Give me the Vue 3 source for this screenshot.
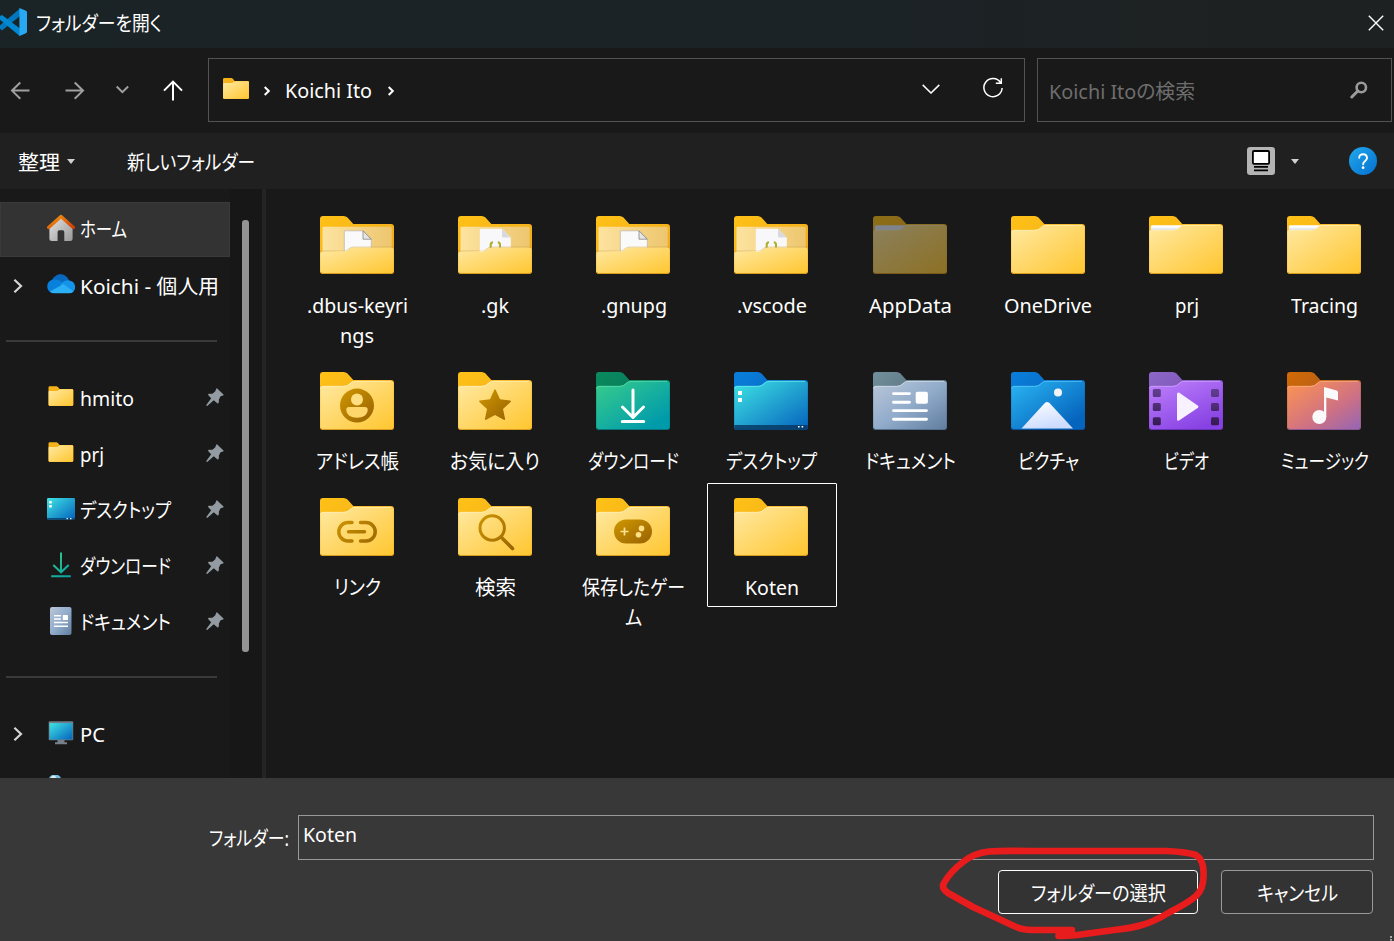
<script setup>
const applyFit = (el, { value }) => {
  el.style.transform = 'none'
  el.style.marginRight = '0'
  const natural = el.getBoundingClientRect().width
  if (!natural) return
  el.style.transform = `scaleX(${value / natural})`
  el.style.marginRight = `${value - natural}px`
}
const vFit = { mounted: applyFit }

const places = [
  { label: 'ホーム', w: 47, icon: 'home', active: true },
  { label: 'Koichi - 個人用', w: 139, icon: 'cloud', expand: true },
  { divider: true },
  { label: 'hmito', w: 54, icon: 'folder', pin: true },
  { label: 'prj', w: 24, icon: 'folder', pin: true },
  { label: 'デスクトップ', w: 91, icon: 'desktop', pin: true },
  { label: 'ダウンロード', w: 91, icon: 'download', pin: true },
  { label: 'ドキュメント', w: 91, icon: 'document', pin: true },
  { divider: true },
  { label: 'PC', w: 25, icon: 'pc', expand: true },
  { label: '', w: 0, icon: 'network' },
]

const themes = {
  yellow: ['fYBack', 'fYFront', '#fff0b8', '#d89b1c'],
  green: ['fGBack', 'fGFront', '#5fe0a8', '#08737c'],
  cyan: ['fBBack', 'fCFront', '#6cf0f2', '#0a4d8a'],
  grey: ['fSBack', 'fSFront', '#d5e0ec', '#54708f'],
  blue: ['fBBack', 'fBFront', '#5cc8fa', '#0b4fa0'],
  purple: ['fPBack', 'fPFront', '#d0a2ff', '#6a31bd'],
  orange: ['fOBack', 'fOFront', '#ffb37c', '#8a5595'],
}

const folders = [
  { lines: [['.dbus-keyri', 101], ['ngs', 34]], open: 'page' },
  { lines: [['.gk', 28]], open: 'code' },
  { lines: [['.gnupg', 66]], open: 'page' },
  { lines: [['.vscode', 70]], open: 'code' },
  { lines: [['AppData', 83]], slip: true, dim: true },
  { lines: [['OneDrive', 88]] },
  { lines: [['prj', 24]], slip: true },
  { lines: [['Tracing', 67]], slip: true },
  { lines: [['アドレス帳', 83]], mark: 'contact' },
  { lines: [['お気に入り', 90]], mark: 'star' },
  { lines: [['ダウンロード', 91]], mark: 'download', theme: 'green' },
  { lines: [['デスクトップ', 91]], mark: 'desktop', theme: 'cyan' },
  { lines: [['ドキュメント', 91]], mark: 'document', theme: 'grey' },
  { lines: [['ピクチャ', 61]], mark: 'picture', theme: 'blue' },
  { lines: [['ビデオ', 45]], mark: 'video', theme: 'purple' },
  { lines: [['ミュージック', 88]], mark: 'music', theme: 'orange' },
  { lines: [['リンク', 47]], mark: 'link' },
  { lines: [['検索', 41]], mark: 'search' },
  { lines: [['保存したゲー', 103], ['ム', 17]], mark: 'game' },
  { lines: [['Koten', 54]], selected: true },
].map((f) => ({ ...f, t: themes[f.theme || 'yellow'] }))

const frontPath =
  'M0.3 16.6Q0.3 13.9 3 13.9H23.5C27 13.9 28.6 12.6 30.2 11.1C31.8 9.6 33 8.9 35 8.9H71Q73.7 8.9 73.7 11.6V54.8Q73.7 57.5 71 57.5H3Q0.3 57.5 0.3 54.8Z'
const openPath =
  'M0.3 38Q0.3 35.5 2.8 35.5H24C28 35.5 29 31.6 34 31.6H71.2Q73.7 31.6 73.7 34V54.8Q73.7 57.5 71 57.5H3Q0.3 57.5 0.3 54.8Z'
</script>

<template>
  <div class="dialog">
    <svg class="defs" width="0" height="0" aria-hidden="true">
      <defs>
        <linearGradient id="fYBack" x1="0" y1="0" x2="1" y2="1"><stop offset="0" stop-color="#ffc216" /><stop offset="1" stop-color="#eda41f" /></linearGradient>
        <linearGradient id="fYFront" x1="0" y1="0" x2="1" y2="1"><stop offset="0" stop-color="#ffe9a3" /><stop offset="1" stop-color="#ffc62f" /></linearGradient>
        <linearGradient id="fYInner" x1="0" y1="0" x2="1" y2="0"><stop offset="0" stop-color="#fde3a0" /><stop offset="1" stop-color="#edc66f" /></linearGradient>
        <linearGradient id="fGBack" x1="0" y1="0" x2="1" y2="1"><stop offset="0" stop-color="#0a8a5c" /><stop offset="1" stop-color="#036b62" /></linearGradient>
        <linearGradient id="fGFront" x1="0" y1="0" x2="1" y2="1"><stop offset="0" stop-color="#38cd8b" /><stop offset=".85" stop-color="#009bab" /></linearGradient>
        <linearGradient id="fBBack" x1="0" y1="0" x2="1" y2="1"><stop offset="0" stop-color="#0a7fdc" /><stop offset="1" stop-color="#0558ad" /></linearGradient>
        <linearGradient id="fCFront" x1="0" y1="0" x2="1" y2="1"><stop offset="0" stop-color="#3fe4e4" /><stop offset="1" stop-color="#0562bd" /></linearGradient>
        <linearGradient id="fSBack" x1="0" y1="0" x2="1" y2="1"><stop offset="0" stop-color="#72909d" /><stop offset="1" stop-color="#40565f" /></linearGradient>
        <linearGradient id="fSFront" x1="0" y1="0" x2="1" y2="1"><stop offset="0" stop-color="#bac7d8" /><stop offset=".5" stop-color="#92accb" /><stop offset="1" stop-color="#607d9f" /></linearGradient>
        <linearGradient id="fBFront" x1="0" y1="0" x2="1" y2="1"><stop offset="0" stop-color="#2bb6f3" /><stop offset=".85" stop-color="#0564bd" /></linearGradient>
        <linearGradient id="fPBack" x1="0" y1="0" x2="1" y2="1"><stop offset="0" stop-color="#8d67c9" /><stop offset="1" stop-color="#6a419c" /></linearGradient>
        <linearGradient id="fPFront" x1="0.1" y1="0" x2=".7" y2="1"><stop offset="0" stop-color="#bc7ffa" /><stop offset="1" stop-color="#8640e3" /></linearGradient>
        <linearGradient id="fOBack" x1="0" y1="0" x2="1" y2="1"><stop offset="0" stop-color="#d46a04" /><stop offset="1" stop-color="#865037" /></linearGradient>
        <linearGradient id="fOFront" x1="0" y1="0" x2="1" y2="1"><stop offset="0" stop-color="#ff9550" /><stop offset=".6" stop-color="#cf7183" /><stop offset="1" stop-color="#9365b5" /></linearGradient>
        <linearGradient id="gold" x1="0" y1="0" x2="1" y2="1"><stop offset="0" stop-color="#cf9700" /><stop offset="1" stop-color="#986203" /></linearGradient>
        <linearGradient id="goldLine" gradientUnits="userSpaceOnUse" x1="18" y1="18" x2="56" y2="52"><stop offset="0" stop-color="#cf9700" /><stop offset="1" stop-color="#986203" /></linearGradient>
        <linearGradient id="snow" x1="0" y1="0" x2=".4" y2="1"><stop offset="0" stop-color="#ffffff" /><stop offset="1" stop-color="#cddcff" /></linearGradient>
        <linearGradient id="slip" x1="0" y1="0" x2="0" y2="1"><stop offset="0.3" stop-color="#ffffff" /><stop offset="1" stop-color="#d3dbe0" /></linearGradient>
        <linearGradient id="film" gradientUnits="userSpaceOnUse" x1="0" y1="14" x2="0" y2="54"><stop offset="0" stop-color="#664198" /><stop offset="1" stop-color="#35194f" /></linearGradient>
        <linearGradient id="roof" x1="0" y1="0" x2="1" y2="1"><stop offset="0" stop-color="#f59a12" /><stop offset="1" stop-color="#cf3c05" /></linearGradient>
        <linearGradient id="wall" x1="0" y1="0" x2="1" y2="1"><stop offset="0" stop-color="#e5e5e5" /><stop offset="1" stop-color="#999999" /></linearGradient>
        <linearGradient id="help" x1="0" y1="0" x2="1" y2="1"><stop offset="0" stop-color="#22a8ec" /><stop offset="1" stop-color="#0470d0" /></linearGradient>
        <linearGradient id="arrow" gradientUnits="userSpaceOnUse" x1="5" y1="2" x2="22" y2="26"><stop offset="0" stop-color="#35c987" /><stop offset="1" stop-color="#08a2a4" /></linearGradient>
      </defs>
    </svg>

    <header class="titlebar">
      <svg class="logo" width="28" height="32" viewBox="0 0 28 32">
        <path d="M-1 20 20 2.5 20 10 2 24.5-1 22Z" fill="#0277bd" />
        <path d="M-1 10.5 2 9 20 22.5V30.2L-1 13Z" fill="#0288d1" />
        <path d="M19.4 2 26 4.8Q27 5.4 27 6.5V25.5Q27 26.6 26 27.2L19.4 30Z" fill="#29a8f2" />
      </svg>
      <h1><span v-fit="126" class="fit">フォルダーを開く</span></h1>
      <svg class="close" width="16" height="16" viewBox="0 0 16 16"><path d="M.8.8 15.2 15.2M15.2.8.8 15.2" stroke="#fff" stroke-width="1.4" /></svg>
    </header>

    <nav class="navbar">
      <div class="history">
        <svg width="41" height="64" viewBox="0 0 41 64"><path d="M29.5 32.6H12M20.3 24.5 12 32.6 20.3 40.7" class="st grey" /></svg>
        <svg width="67" height="64" viewBox="0 0 67 64"><path d="M24.5 32.6H42M33.7 24.5 42 32.6 33.7 40.7" class="st grey" /></svg>
        <svg width="29" height="64" viewBox="0 0 29 64"><path d="M8.7 28.5 14.4 34.1 20.1 28.5" class="st grey" /></svg>
        <svg width="71" height="64" viewBox="0 0 71 64"><path d="M36 42.5V24M27 32.6 36 23.6 45 32.6" class="st white" /></svg>
      </div>
      <div class="address">
        <svg class="crumb-folder" width="26" height="21" viewBox="0 0 74 58" preserveAspectRatio="none">
          <path d="M0 4Q0 0 4 0H24Q28 0 33 8H70Q74 8 74 12V54Q74 58 70 58H4Q0 58 0 54Z" fill="#f6b21b" />
          <path :d="frontPath" fill="url(#fYFront)" />
        </svg>
        <svg class="crumb-sep" width="8" height="10" viewBox="0 0 8 10"><path d="M1.7 1 5.8 5 1.7 9" class="st white" /></svg>
        <span class="crumb"><span v-fit="87" class="fit">Koichi Ito</span></span>
        <svg class="crumb-sep last" width="8" height="10" viewBox="0 0 8 10"><path d="M1.7 1 5.8 5 1.7 9" class="st white" /></svg>
        <svg class="drop" width="18" height="10" viewBox="0 0 18 10"><path d="M.7.9 9 9 17.3.9" class="st thin" /></svg>
        <svg class="reload" width="22" height="22" viewBox="0 0 22 22"><path d="M18.6 5.6A9.1 9.1 0 1 0 20.1 11M19.3 1.2V6.3H13.8" class="st thin" /></svg>
      </div>
      <div class="search">
        <span v-fit="146" class="fit">Koichi Itoの検索</span>
        <svg width="18" height="18" viewBox="0 0 18 18"><circle cx="11.3" cy="6.5" r="4.7" fill="none" stroke="#9b9b9b" stroke-width="2.6" /><path d="M7.8 10 1.8 16" stroke="#9b9b9b" stroke-width="3" stroke-linecap="round" /></svg>
      </div>
    </nav>

    <div class="toolbar">
      <span v-fit="42" class="fit">整理</span>
      <i class="caret first"></i>
      <span v-fit="128" class="fit">新しいフォルダー</span>
      <svg class="view" width="28" height="28" viewBox="0 0 28 28">
        <rect width="28" height="28" rx="3.2" fill="#b4b4b4" />
        <rect x="5.9" y="4" width="16.2" height="12.8" rx="1" fill="#fff" stroke="#000" stroke-width="1.8" />
        <path d="M7 19.9H21M7 23.3H21" stroke="#000" stroke-width="1.7" />
      </svg>
      <i class="caret second"></i>
      <svg class="help" width="28" height="28" viewBox="0 0 28 28">
        <circle cx="14" cy="14" r="14" fill="url(#help)" />
        <path d="M10.2 10.8C10.2 6 18 6 18 11.1C18 14 14.1 14 14.1 17.2" fill="none" stroke="#fff" stroke-width="1.9" stroke-linecap="round" />
        <circle cx="14.1" cy="20.7" r="1.4" fill="#fff" />
      </svg>
    </div>

    <main class="body">
      <aside class="sidebar">
        <div class="tree">
          <template v-for="(p, i) in places" :key="i">
            <div v-if="p.divider" class="divider"><hr /></div>
            <div v-else class="row" :class="{ active: p.active }">
              <span class="twist">
                <svg v-if="p.expand" width="10" height="16" viewBox="0 0 10 16"><path d="M1.4 1.7 8 8 1.4 14.3" fill="none" stroke="#d6d6d6" stroke-width="2.2" /></svg>
              </span>
              <svg class="pic" width="28" height="28" viewBox="0 0 28 28">
                <g v-if="p.icon === 'home'">
                  <path d="M2.4 12 14 2.4 25.6 12V24.5Q25.6 27 23 27H17.3V18Q17.3 16.2 15.7 16.2H12.3Q10.6 16.2 10.6 18V27H5Q2.4 27 2.4 24.5Z" fill="url(#wall)" />
                  <path d="M1.6 13.5 14 2.5 26.4 13.5" fill="none" stroke="url(#roof)" stroke-width="3.2" stroke-linecap="round" stroke-linejoin="round" />
                </g>
                <g v-else-if="p.icon === 'cloud'">
                  <path d="M4 11C8 1 18 1 22 9L23 13 12 17Z" fill="#0868bd" />
                  <path d="M7 8.6C10 8.3 13 9.5 17 12.6L8 22H6C-2 21-1.5 9 7 8.6Z" fill="#0880dc" />
                  <path d="M14 13C17 9 20 9 22.5 9.4C29.5 10.5 30 20 24 22H10Z" fill="#1493e8" />
                  <path d="M3 20.5 16.5 13 26.5 20.6Q25 22.3 22.5 22.3H6.5Q4 22.2 3 20.5Z" fill="#2bb0f6" />
                </g>
                <g v-else-if="p.icon === 'folder'" transform="translate(1.5 3.2) scale(.335 .34)">
                  <path d="M0 4Q0 0 4 0H24Q28 0 33 8H70Q74 8 74 12V54Q74 58 70 58H4Q0 58 0 54Z" fill="#f6b21b" />
                  <path :d="frontPath" fill="url(#fYFront)" />
                </g>
                <g v-else-if="p.icon === 'desktop'" transform="translate(0 1)">
                  <rect x="0" y="2" width="28" height="21.5" rx="1.2" fill="url(#fCFront)" />
                  <path d="M0 22H28Q28 23.5 27 23.5H1Q0 23.5 0 22Z" fill="#0b4b7a" />
                  <path d="M2.2 5H4.8V7.5H2.2ZM2.2 9H4.8V11.5H2.2Z" fill="#fff" />
                  <path d="M19.5 22H21V23.3H19.5ZM23 22H24.5V23.3H23Z" fill="#dcecff" />
                </g>
                <path v-else-if="p.icon === 'download'" d="M14 1.5V21M6.3 14 14 21.3 21.7 14M4.2 25.2H23.8" fill="none" stroke="url(#arrow)" stroke-width="2" />
                <g v-else-if="p.icon === 'document'">
                  <rect x="3" y="0" width="21.5" height="28" rx="2" fill="url(#fSFront)" />
                  <path d="M7 8.8H14M7 12H14M7 15.6H21M7 19.2H21" stroke="#fff" stroke-width="1.5" />
                  <rect x="15.8" y="8" width="5.2" height="5" rx=".6" fill="#fff" />
                </g>
                <g v-else-if="p.icon === 'pc'" transform="translate(0 .7)">
                  <path d="M10.5 20H17.5V22.5H20V24.5H8V22.5H10.5Z" fill="#77818b" />
                  <rect x="1.7" y="1.5" width="24.5" height="19" rx="1" fill="#707c86" />
                  <rect x="2.5" y="3.4" width="23" height="16.4" fill="url(#fCFront)" />
                </g>
                <g v-else>
                  <circle cx="8" cy="6" r="6.6" fill="#78bedd" />
                  <circle cx="6.5" cy="3" r="2.5" fill="#d7ebf5" />
                </g>
              </svg>
              <span class="name"><span v-if="p.label" v-fit="p.w" class="fit">{{ p.label }}</span></span>
              <svg v-if="p.pin" class="pin" width="18" height="18" viewBox="0 0 18 18">
                <path d="M11.2.4 17.5 6.4Q18 7.3 17 7.5L14.6 8.3 13 11.3 12.7 14.8Q12.2 16 11.300 15.300L7.800 12.300 1.200 17.900Q.2 17.900.3 16.900L5.200 10.300 2.300 7.300Q1.700 6.100 2.900 5.800L6.500 5.700 9.300 3.200 10.200.8Q10.500.1 11.200.4Z" fill="#939ba2" />
              </svg>
            </div>
          </template>
        </div>
        <div class="track"><div class="thumb"></div></div>
      </aside>

      <section class="files">
        <div v-for="(f, i) in folders" :key="i" class="cell" :class="{ selected: f.selected }">
          <svg class="folder" :class="{ dim: f.dim }" width="74" height="58" viewBox="0 0 74 58">
            <path d="M0 3Q0 0 3 0H23.5Q26 0 27.5 1.5L33.3 8.1H71Q74 8.1 74 11V54.8Q74 58 71 58H3Q0 58 0 54.8Z" :fill="`url(#${f.t[0]})`" />
            <template v-if="f.open">
              <path d="M2.5 12Q2.5 10.8 3.7 10.8H70.5Q71.7 10.8 71.7 12V40H2.5Z" fill="url(#fYInner)" />
              <path v-if="f.open === 'page'" d="M24.3 14.8H43L51.3 23.2V38H24.3Z" fill="#fafafa" stroke="#b9b4a8" stroke-width=".7" />
              <path v-if="f.open === 'page'" d="M43 14.8V23.2H51.3Z" fill="#e6e6e6" stroke="#777" stroke-width=".7" />
              <template v-if="f.open === 'code'">
                <path d="M23 12.8H44L52.8 21.5V38H21.8V14Q21.8 12.8 23 12.8Z" fill="#f8f8fa" />
                <path d="M44 12.8V20Q44 21.5 45.5 21.5H52.8Z" fill="#d8d9dc" />
                <path d="M35 26.3Q32.7 26.3 32.7 29V34M39.8 26.3Q42 26.3 42 29V34" fill="none" stroke="#aeb02d" stroke-width="2.1" />
              </template>
              <path d="M.3 36.5V34.5H24C28 34.5 29 30.6 34 30.6H73.7V34H34Z" fill="#b88b35" opacity=".35" />
              <path :d="openPath" fill="url(#fYFront)" />
            </template>
            <template v-else>
              <path :d="frontPath" :fill="`url(#${f.t[1]})`" />
              <path d="M.6 16.6Q.6 14.3 3 14.3H23.5C27 14.3 28.6 13 30.2 11.5C31.8 10 33 9.3 35 9.3H71" fill="none" :stroke="f.t[2]" stroke-width=".8" />
              <path v-if="f.slip" d="M1.800 14.500V10.800Q1.800 9.200 3.300 9.200H32.800C30.500 11 29 13.900 24.500 13.900H3Q2 13.900 1.800 14.500Z" :fill="f.dim ? '#e3edff' : 'url(#slip)'" />
            </template>
            <path d="M1 56.2Q1.6 57.5 3 57.5H71Q72.5 57.5 73.1 56.2" fill="none" :stroke="f.t[3]" stroke-width="1" />

            <g v-if="f.mark === 'contact'">
              <circle cx="37" cy="33.6" r="17" fill="url(#gold)" />
              <circle cx="37" cy="27.6" r="6" fill="#ffdf82" />
              <path d="M29 35H45Q47.7 35 47.7 37.6C47.7 43 43 45.8 37 45.8S26.3 43 26.3 37.6Q26.3 35 29 35Z" fill="#ffd66b" />
            </g>
            <path v-else-if="f.mark === 'star'" d="M36.2 18Q37 16.7 37.8 18L42 27.3 52.2 28.5Q53.4 29 52.6 30L45 37 47.1 46.9Q47 48.3 45.8 47.8L37 42.9 28.2 47.8Q26.9 48.2 26.9 46.9L29 37 21.4 30Q20.6 29 21.8 28.5L32 27.3Z" fill="url(#gold)" />
            <path v-else-if="f.mark === 'download'" d="M37 18V45M26.5 35 37 45.5 47.5 35M26.3 49.6H47.7" fill="none" stroke="#fff" stroke-width="3" stroke-linecap="round" stroke-linejoin="round" />
            <g v-else-if="f.mark === 'desktop'">
              <path d="M.3 53H73.7V55Q73.7 57.5 71 57.5H3Q.3 57.5.3 55Z" fill="#07365f" opacity=".82" />
              <path d="M4 19H8V23H4ZM4 26H8V30H4Z" fill="#fff" />
              <path d="M64 54H65.6V55.6H64ZM67.6 54H69.2V55.6H67.6Z" fill="#fff" />
            </g>
            <g v-else-if="f.mark === 'document'">
              <path d="M20.5 21.6H36.5M20.5 30.2H36.5M20.5 38.6H53.5M20.5 47.2H53.5" stroke="#fff" stroke-width="2.9" stroke-linecap="round" />
              <rect x="42.7" y="19.8" width="12.2" height="12" rx="1.8" fill="#fff" />
            </g>
            <g v-else-if="f.mark === 'picture'">
              <path d="M10.5 56.5 33.8 31Q36 28.8 38.5 31L62 56.5Z" fill="url(#snow)" />
              <circle cx="47" cy="20.4" r="4" fill="#f3f3f5" />
            </g>
            <g v-else-if="f.mark === 'video'">
              <g fill="url(#film)">
                <rect x="3.8" y="17" width="8" height="8" rx="1.5" /><rect x="3.8" y="31" width="8" height="8" rx="1.5" /><rect x="3.8" y="45.3" width="8" height="8" rx="1.5" />
                <rect x="62" y="17" width="8" height="8" rx="1.5" /><rect x="62" y="31" width="8" height="8" rx="1.5" /><rect x="62" y="45.3" width="8" height="8" rx="1.5" />
              </g>
              <path d="M28 22V47.5Q28.3 49.5 30 48.5L49 35.7Q50 34.7 49 33.7L30 20.6Q28.3 20 28 22Z" fill="#f8f1ff" />
            </g>
            <g v-else-if="f.mark === 'music'" fill="#fafafa">
              <circle cx="32.3" cy="45" r="7" />
              <path d="M37 15.6Q37.3 14.9 38 15.2L49.7 18.6Q51 19.1 51 20.4V28.5L39.3 25.5V45H37Z" />
            </g>
            <path v-else-if="f.mark === 'link'" d="M31.5 24.5H27.500A9.200 9.200 0 0 0 27.500 42.900H31.500M40 24.500H45.500A9.200 9.200 0 0 1 45.500 42.900H40M28 33.700H44" transform="translate(.5 0)" fill="none" stroke="url(#goldLine)" stroke-width="3.5" stroke-linecap="round" />
            <g v-else-if="f.mark === 'search'" fill="none" stroke="url(#goldLine)" stroke-linecap="round">
              <circle cx="34.2" cy="30" r="12.2" stroke-width="3" />
              <path d="M43 39 54.5 50.5" stroke-width="3.6" />
            </g>
            <g v-else-if="f.mark === 'game'">
              <rect x="18" y="21.5" width="38" height="24" rx="12" fill="url(#gold)" />
              <path d="M24.5 33.5H32.5M28.5 29.5V37.5" stroke="#ffe291" stroke-width="1.7" />
              <circle cx="45.5" cy="30.4" r="2.8" fill="#ffe084" /><circle cx="42.5" cy="36.7" r="2.8" fill="#ffe084" />
            </g>
          </svg>
          <div class="label">
            <div v-for="l in f.lines" :key="l[0]"><span v-fit="l[1]" class="fit">{{ l[0] }}</span></div>
          </div>
        </div>
      </section>
    </main>

    <footer class="footer">
      <div class="field">
        <label><span v-fit="80" class="fit">フォルダー:</span></label>
        <div class="input"><span v-fit="54" class="fit">Koten</span></div>
      </div>
      <div class="actions">
        <button class="primary"><span v-fit="135" class="fit">フォルダーの選択</span></button>
        <button class="cancel"><span v-fit="81" class="fit">キャンセル</span></button>
      </div>
      <svg class="scribble" width="280" height="100" viewBox="930 841 280 100">
        <path d="M1072 930H1032Q1021 930 1014 926L973 907 948 893Q941 888 944 883Q950 872 963 862Q974 853 989 851.5Q1000 850.5 1030 851H1167Q1187 852 1196 855Q1204 860 1203.5 874Q1204 889 1196 896Q1188 903 1170 912C1160 918 1150 923 1142 925Q1132 928 1118 929.5L1077 935Q1066 936 1058.5 936L1059 932.5H1072" fill="none" stroke="#e81c1c" stroke-width="6.6" stroke-linecap="round" stroke-linejoin="round" />
      </svg>
      <i class="grip"></i>
    </footer>
  </div>
</template>

<style>
body {
  margin: 0;
  background: #1a1a1a;
}
</style>

<style scoped>
.dialog {
  width: 1394px;
  height: 941px;
  display: flex;
  flex-direction: column;
  overflow: hidden;
  background: #191919;
  color: #fff;
  font: 400 20px/30px 'Noto Sans', 'Noto Sans CJK JP', sans-serif;
  font-feature-settings: 'palt';
}
svg { display: block; flex: none; }
.defs { position: absolute; }
.fit { display: inline-block; white-space: pre; transform-origin: 0 50%; }
.st { fill: none; stroke-width: 2; }
.grey { stroke: #a0a0a0; }
.white { stroke: #fff; }
.thin { stroke: #fff; stroke-width: 1.5; }

.titlebar {
  height: 48px;
  flex: none;
  display: flex;
  align-items: center;
  padding: 0 10px 0 0;
  background: linear-gradient(90deg, #1a2326, #1c2326 60%, #1e2121);
}
.logo { margin-top: -4px; }
h1 { flex: 1; margin: 0 0 1px 8px; font: inherit; }
.close { margin: -3px 0 0; }

.navbar {
  height: 64px;
  flex: none;
  display: flex;
  padding: 10px 2px 11px 0;
}
.history { width: 208px; display: flex; }
.address, .search { box-sizing: border-box; border: 1px solid #535353; display: flex; align-items: center; }
.address { width: 817px; margin-right: 12px; padding: 0 21px 0 14px; }
.crumb-folder { margin-top: -3px; }
.crumb-sep { margin: 2px 13px 0 14px; }
.crumb { margin: 2px 0 0 1px; }
.crumb-sep.last { margin-right: auto; margin-left: 15px; }
.drop { margin: -3px 42px 0 0; }
.reload { margin-top: -4px; margin-right: -1px; }
.search { width: 355px; justify-content: space-between; padding: 3px 23px 0 11px; color: #6e6e6e; }
.search svg { margin-top: -4px; }

.toolbar {
  height: 56px;
  flex: none;
  display: flex;
  align-items: center;
  padding: 0 17px 0 18px;
  box-sizing: border-box;
  background: #202020;
}
.toolbar .fit { position: relative; top: 1.5px; }
.caret { border: 4.5px solid transparent; border-top: 5px solid #d0d0d0; border-bottom: 0; }
.caret.first { margin: 0 52px 0 7px; }
.view { margin-left: auto; }
.caret.second { margin: 0 50px 0 15px; position: relative; left: -.5px; }
.view { position: relative; left: -1px; }

.body { flex: 1; min-height: 0; display: flex; }
.sidebar { width: 262px; flex: none; display: flex; border-right: 4px solid #242424; overflow: hidden; }
.tree { width: 230px; padding-top: 12.5px; }
.row, .divider { height: 56px; display: flex; align-items: center; box-sizing: border-box; }
.row.active { background: #333; box-shadow: inset 0 0 0 1px #3a3a3a; height: 55px; margin-bottom: 1px; }
.twist { width: 47px; box-sizing: border-box; padding-left: 13px; }
.pic { margin-right: 5px; margin-top: -2px; }
.name { flex: 1; min-width: 0; white-space: nowrap; padding-top: 2px; }
.pin { margin-right: 6px; margin-top: -1px; }
hr { width: 211px; height: 2px; margin: -2px 0 0 6px; border: 0; background: #3a3a3a; }
.track { width: 32px; background: #171717; padding: 31px 0 0 12px; box-sizing: border-box; }
.thumb { width: 7px; height: 432px; border-radius: 3px; background: #949494; }

.files {
  flex: 1;
  display: grid;
  grid-template-columns: repeat(8, 138.25px);
  grid-auto-rows: max-content;
  align-content: start;
  row-gap: 1px;
  padding: 12px 0 0 26px;
}
.cell {
  width: 130px;
  box-sizing: border-box;
  border: 1px solid transparent;
  padding: 14px 0 4px;
  display: flex;
  flex-direction: column;
  align-items: center;
  align-self: start;
}
.cell.selected { border-color: #fff; border-radius: 1px; height: 124px; }
.folder { margin-left: -1px; }
.dim { opacity: .5; }
.label { margin-top: 17px; text-align: center; }

.footer {
  position: relative;
  height: 163px;
  flex: none;
  box-sizing: border-box;
  padding: 37px 20px 0;
  background: #383838;
}
.field { display: flex; }
.field label { width: 278px; padding: 9px 9px 0 0; box-sizing: border-box; text-align: right; }
.input { flex: 1; height: 45px; box-sizing: border-box; border: 1px solid #999; padding: 4px; }
.actions { display: flex; justify-content: flex-end; gap: 23px; margin: 10px 1px 0 0; }
button {
  height: 44px;
  padding: 3px 0 0;
  box-sizing: border-box;
  border: 1px solid #9a9a9a;
  border-radius: 4px;
  background: #333;
  color: #fff;
  font: inherit;
  font-feature-settings: inherit;
}
.primary { width: 200px; border-color: #fff; }
.cancel { width: 152px; }
.scribble { position: absolute; left: 930px; top: 63px; pointer-events: none; }
.grip { position: absolute; right: 0; bottom: 0; width: 2px; height: 5px; border-left: 2px dotted #aaa; }
</style>
